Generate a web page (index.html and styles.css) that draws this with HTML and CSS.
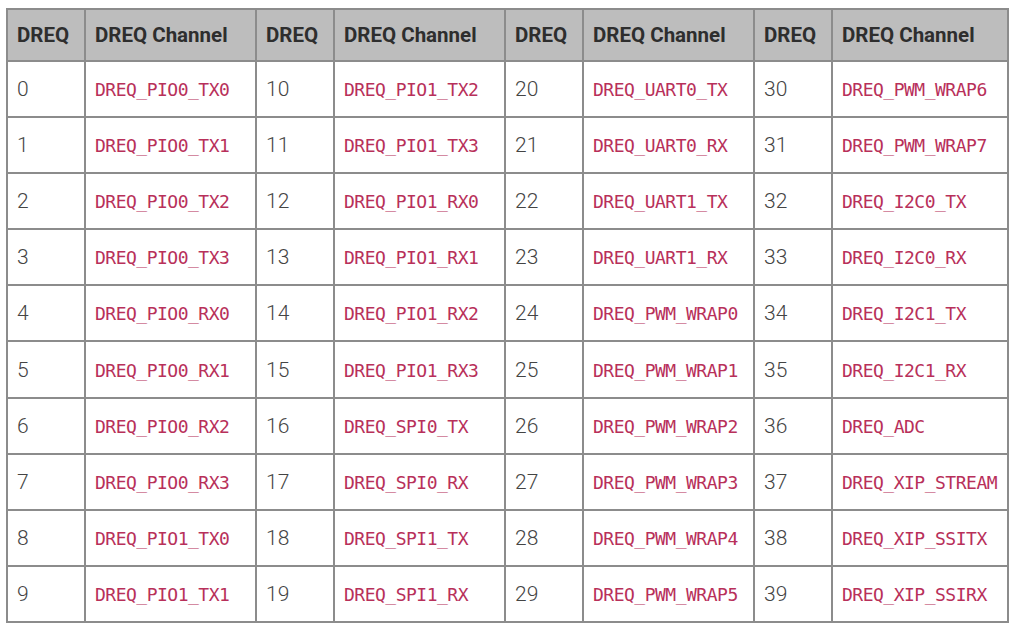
FILE: index.html
```html
<!DOCTYPE html>
<html>
<head>
<meta charset="utf-8">
<link rel="stylesheet" href="styles.css">
</head>
<body>
<table class="dreq">
<colgroup>
<col class="c-num"><col class="c-ch">
<col class="c-num"><col class="c-ch">
<col class="c-num"><col class="c-ch">
<col class="c-num"><col class="c-ch-last">
</colgroup>
<thead>
<tr><th>DREQ</th><th>DREQ Channel</th><th>DREQ</th><th>DREQ Channel</th><th>DREQ</th><th>DREQ Channel</th><th>DREQ</th><th>DREQ Channel</th></tr>
</thead>
<tbody>
<tr><td>0</td><td><code>DREQ_PIO0_TX0</code></td><td>10</td><td><code>DREQ_PIO1_TX2</code></td><td>20</td><td><code>DREQ_UART0_TX</code></td><td>30</td><td><code>DREQ_PWM_WRAP6</code></td></tr>
<tr><td>1</td><td><code>DREQ_PIO0_TX1</code></td><td>11</td><td><code>DREQ_PIO1_TX3</code></td><td>21</td><td><code>DREQ_UART0_RX</code></td><td>31</td><td><code>DREQ_PWM_WRAP7</code></td></tr>
<tr><td>2</td><td><code>DREQ_PIO0_TX2</code></td><td>12</td><td><code>DREQ_PIO1_RX0</code></td><td>22</td><td><code>DREQ_UART1_TX</code></td><td>32</td><td><code>DREQ_I2C0_TX</code></td></tr>
<tr><td>3</td><td><code>DREQ_PIO0_TX3</code></td><td>13</td><td><code>DREQ_PIO1_RX1</code></td><td>23</td><td><code>DREQ_UART1_RX</code></td><td>33</td><td><code>DREQ_I2C0_RX</code></td></tr>
<tr><td>4</td><td><code>DREQ_PIO0_RX0</code></td><td>14</td><td><code>DREQ_PIO1_RX2</code></td><td>24</td><td><code>DREQ_PWM_WRAP0</code></td><td>34</td><td><code>DREQ_I2C1_TX</code></td></tr>
<tr><td>5</td><td><code>DREQ_PIO0_RX1</code></td><td>15</td><td><code>DREQ_PIO1_RX3</code></td><td>25</td><td><code>DREQ_PWM_WRAP1</code></td><td>35</td><td><code>DREQ_I2C1_RX</code></td></tr>
<tr><td>6</td><td><code>DREQ_PIO0_RX2</code></td><td>16</td><td><code>DREQ_SPI0_TX</code></td><td>26</td><td><code>DREQ_PWM_WRAP2</code></td><td>36</td><td><code>DREQ_ADC</code></td></tr>
<tr><td>7</td><td><code>DREQ_PIO0_RX3</code></td><td>17</td><td><code>DREQ_SPI0_RX</code></td><td>27</td><td><code>DREQ_PWM_WRAP3</code></td><td>37</td><td><code>DREQ_XIP_STREAM</code></td></tr>
<tr><td>8</td><td><code>DREQ_PIO1_TX0</code></td><td>18</td><td><code>DREQ_SPI1_TX</code></td><td>28</td><td><code>DREQ_PWM_WRAP4</code></td><td>38</td><td><code>DREQ_XIP_SSITX</code></td></tr>
<tr><td>9</td><td><code>DREQ_PIO1_TX1</code></td><td>19</td><td><code>DREQ_SPI1_RX</code></td><td>29</td><td><code>DREQ_PWM_WRAP5</code></td><td>39</td><td><code>DREQ_XIP_SSIRX</code></td></tr>
</tbody>
</table>
</body>
</html>
```
FILE: styles.css
```css
html, body {
  margin: 0;
  background: #ffffff;
}
body {
  padding: 8px 0 0 6px;
}
.dreq {
  border-collapse: collapse;
  table-layout: fixed;
  width: 1003px;
  font-family: Roboto, "Liberation Sans", sans-serif;
  border: 2px solid #8c8c8c;
}
.c-num { width: 78px; }
.c-ch { width: 171px; }
.c-ch-last { width: 176px; }
.dreq th, .dreq td {
  border: 2px solid #8c8c8c;
  text-align: left;
  vertical-align: middle;
  padding: 0 0 0 9px;
  white-space: nowrap;
  overflow: hidden;
}
.dreq th {
  background: #bdbdbd;
  color: #2e2e2e;
  font-weight: 700;
  font-size: 20.5px;
  height: 50px;
}
.dreq td {
  height: 54.1px;
  color: #444444;
  font-weight: 300;
  font-size: 21px;
}
.dreq code {
  font-family: "DejaVu Sans Mono", "Liberation Mono", monospace;
  font-size: 18px;
  color: #b8305a;
  letter-spacing: -0.5px;
}
```
